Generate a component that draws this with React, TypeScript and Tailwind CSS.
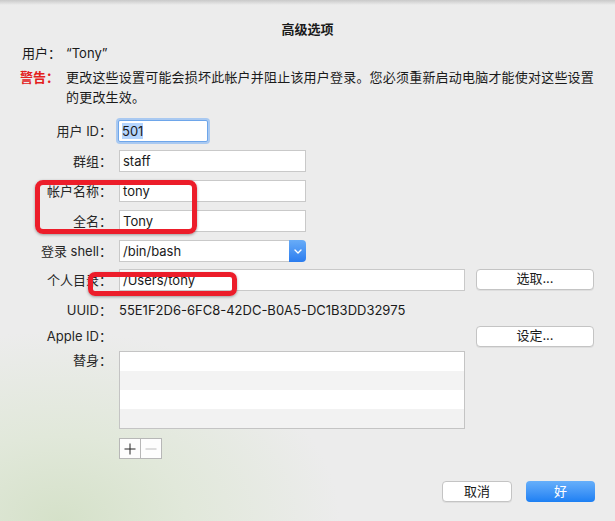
import { ReactNode } from 'react';

const FONT = "font-['Inter','Noto_Sans_CJK_SC',sans-serif]";

function Row({ label, children, className = '', top = false }: { label: string; children?: ReactNode; className?: string; top?: boolean }) {
  return (
    <div className={`flex ${top ? 'items-start' : 'items-center'} ${className}`}>
      <div className="w-[113px] shrink-0 pr-[1px] text-right text-[13px] leading-[22px] text-[#262626]">{label}</div>
      <div className="ml-[6px] flex-1">{children}</div>
    </div>
  );
}

function TextInput({ value, width }: { value: string; width: string }) {
  return (
    <div
      className={`${width} h-[22px] border border-[#c9c9c9] bg-white px-[3px] text-[13px] leading-[20px] text-[#1a1a1a]`}
    >
      {value}
    </div>
  );
}

function PushButton({ children, className = '' }: { children: ReactNode; className?: string }) {
  return (
    <div
      className={`flex h-[21px] items-center justify-center rounded-[4px] border border-[#c4c4c4] bg-white text-[13px] text-[#1a1a1a] shadow-[0_1px_0_rgba(0,0,0,0.06)] ${className}`}
    >
      {children}
    </div>
  );
}

export default function App() {
  return (
    <div
      className={`relative h-[521px] w-[615px] overflow-hidden bg-[#ececec] bg-[radial-gradient(ellipse_280px_190px_at_60px_521px,#d5e1c9_0%,#e1e8da_45%,#ececec_100%)] ${FONT}`}
    >
      <div className="h-[5px] bg-gradient-to-b from-[#c9c9c9] to-[#ececec]" />

      <div className="mt-[14px] text-center text-[13px] font-bold leading-[20px] text-[#1a1a1a]">
        高级选项
      </div>

      <div className="mt-[4px] flex text-[13px] leading-[20px] text-[#1a1a1a]">
        <div className="w-[66px] pl-[22px]">用户：</div>
        <div>“Tony”</div>
      </div>

      <div className="mt-[4px] flex text-[13px] leading-[20px] text-[#1a1a1a]">
        <div className="w-[66px] shrink-0 pl-[20px] font-bold text-[#e3201c]">警告：</div>
        <div className="w-[530px] tracking-[0.2px]">
          更改这些设置可能会损坏此帐户并阻止该用户登录。您必须重新启动电脑才能使对这些设置的更改生效。
        </div>
      </div>

      <div className="mt-[13px] flex flex-col">
        <Row label="用户 ID：">
          <div className="ml-[-1px] h-[22px] w-[90px] rounded-[2px] border border-[#6ea6ea] bg-white px-[3px] text-[13px] leading-[20px] text-[#1a1a1a] shadow-[0_0_0_2px_#a9c9f1]">
            <span className="bg-[#b4d5fe]">501</span>
          </div>
        </Row>

        <Row label="群组：" className="mt-[8px]">
          <TextInput value="staff" width="w-[187px]" />
        </Row>

        <Row label="帐户名称：" className="mt-[8px]">
          <TextInput value="tony" width="w-[187px]" />
        </Row>

        <Row label="全名：" className="mt-[8px]">
          <TextInput value="Tony" width="w-[187px]" />
        </Row>

        <Row label="登录 shell：" className="mt-[8px]">
          <div className="flex h-[22px] w-[187px]">
            <div className="flex-1 border border-r-0 border-[#c9c9c9] bg-white px-[3px] text-[13px] leading-[20px] text-[#1a1a1a]">
              /bin/bash
            </div>
            <div className="flex w-[17px] items-center justify-center rounded-r-[4px] bg-gradient-to-b from-[#68acf7] to-[#2a7cef]">
              <svg width="8" height="5" viewBox="0 0 8 5" fill="none">
                <path d="M1 1l3 3 3-3" stroke="white" strokeWidth="1.4" strokeLinecap="round" strokeLinejoin="round" />
              </svg>
            </div>
          </div>
        </Row>

        <Row label="个人目录：" className="mt-[7px]">
          <div className="flex items-center">
            <TextInput value="/Users/tony" width="w-[346px]" />
            <PushButton className="ml-[11px] mt-[-2px] w-[118px]">选取...</PushButton>
          </div>
        </Row>

        <Row label="UUID：" className="mt-[8px]">
          <div className="text-[13px] leading-[22px] text-[#1a1a1a]">55E1F2D6-6FC8-42DC-B0A5-DC1B3DD32975</div>
        </Row>

        <Row label="Apple ID：" className="mt-[4px]">
          <div className="flex h-[22px] items-center">
            <PushButton className="ml-[357px] w-[118px]">设定...</PushButton>
          </div>
        </Row>

        <Row label="替身：" className="mt-[2px]" top>
          <div className="mt-[2px] w-[346px] border border-[#c4c4c4]">
            <div className="h-[19px] bg-white" />
            <div className="h-[19px] bg-[#f3f3f3]" />
            <div className="h-[19px] bg-white" />
            <div className="h-[19px] bg-[#f2f2f2]" />
          </div>
        </Row>

        <div className="ml-[119px] mt-[9px] flex">
          <div className="flex h-[21px] w-[22px] items-center justify-center border border-[#b7b7b7] bg-[#fdfdfd]">
            <svg width="12" height="12" viewBox="0 0 12 12">
              <path d="M6 0.5v11M0.5 6h11" stroke="#222" strokeWidth="1" />
            </svg>
          </div>
          <div className="flex h-[21px] w-[21px] items-center justify-center border border-l-0 border-[#b7b7b7] bg-[#fdfdfd]">
            <svg width="12" height="12" viewBox="0 0 12 12">
              <path d="M0.5 6h11" stroke="#bdbdbd" strokeWidth="1" />
            </svg>
          </div>
        </div>
      </div>

      <div className="mt-[22px] flex justify-end gap-[14px] pr-[20px]">
        <PushButton className="w-[70px]">取消</PushButton>
        <div className="flex h-[21px] w-[69px] items-center justify-center rounded-[4px] bg-gradient-to-b from-[#66affa] to-[#1b7ff3] text-[13px] text-white">
          好
        </div>
      </div>

      {/* red annotation marks drawn over the dialog */}
      <div className="absolute left-[35px] top-[180px] h-[54px] w-[162px] rounded-[8px] border-[5px] border-[#ec1d2a] shadow-[0_1px_3px_rgba(0,0,0,0.35)]" />
      <div className="absolute left-[88px] top-[272px] h-[24px] w-[149px] rounded-[7px] border-[5px] border-[#ec1d2a] shadow-[0_1px_3px_rgba(0,0,0,0.35)]" />
    </div>
  );
}
